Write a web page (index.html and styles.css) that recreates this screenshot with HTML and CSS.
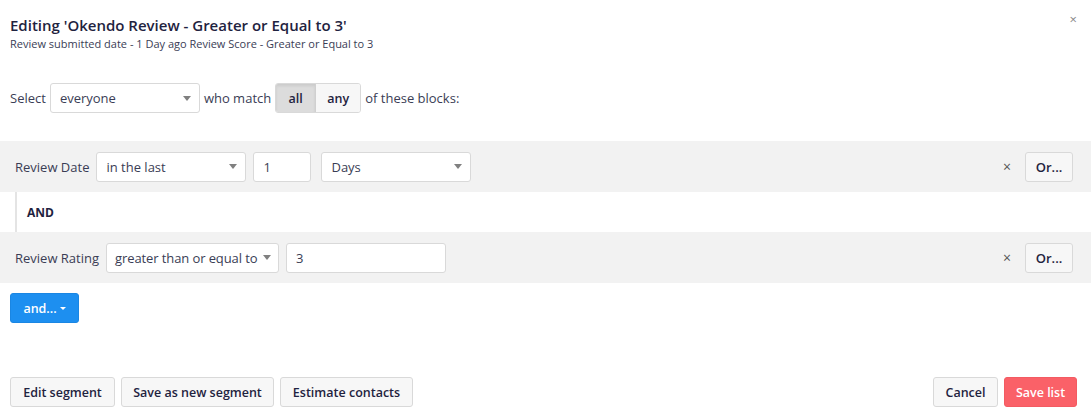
FILE: index.html
```html
<!DOCTYPE html>
<html>
<head>
<meta charset="utf-8">
<link rel="stylesheet" href="styles.css">
</head>
<body>
<div class="modal">
  <header class="head">
    <h1 class="title">Editing 'Okendo Review - Greater or Equal to 3'</h1>
    <p class="subtitle">Review submitted date - 1 Day ago Review Score - Greater or Equal to 3</p>
    <span class="close">&#215;</span>
  </header>

  <div class="match-row">
    <span>Select</span>
    <div class="select w-everyone"><span>everyone</span><i class="caret"></i></div>
    <span>who match</span>
    <div class="btn-group">
      <span class="seg active">all</span>
      <span class="seg">any</span>
    </div>
    <span>of these blocks:</span>
  </div>

  <div class="blocks">
    <div class="block">
      <span class="label">Review Date</span>
      <div class="select w-last"><span>in the last</span><i class="caret"></i></div>
      <div class="input w-num">1</div>
      <div class="select w-days gap-lg"><span>Days</span><i class="caret"></i></div>
      <span class="spacer"></span>
      <span class="remove">&#215;</span>
      <span class="btn or">Or...</span>
    </div>
    <div class="and-sep">AND</div>
    <div class="block">
      <span class="label">Review Rating</span>
      <div class="select w-gte tight"><span>greater than or equal to</span><i class="caret"></i></div>
      <div class="input w-val">3</div>
      <span class="spacer"></span>
      <span class="remove">&#215;</span>
      <span class="btn or">Or...</span>
    </div>
  </div>

  <div class="add-row">
    <span class="btn primary">and... <i class="caret white"></i></span>
  </div>

  <footer class="foot">
    <div class="foot-left">
      <span class="btn">Edit segment</span>
      <span class="btn">Save as new segment</span>
      <span class="btn">Estimate contacts</span>
    </div>
    <div class="foot-right">
      <span class="btn">Cancel</span>
      <span class="btn danger">Save list</span>
    </div>
  </footer>
</div>
</body>
</html>
```
FILE: styles.css
```css
* { box-sizing: border-box; }
html, body { margin: 0; padding: 0; background: #fff; }
body {
  font-family: "Open Sans", "Liberation Sans", sans-serif;
  color: #2a2d45;
  font-size: 13px;
}
.modal { width: 1091px; height: 418px; display: flex; flex-direction: column; }

.head { position: relative; padding: 15px 10px 0 10px; }
.title { margin: 0; font-size: 15px; font-weight: 600; line-height: 20px; color: #1f2340; }
.subtitle { margin: 0; font-size: 11px; line-height: 16px; color: #3a3d55; margin-top: 1px; }
.close { position: absolute; right: 14px; top: 10px; font-size: 13px; color: #888; }

.match-row {
  display: flex; align-items: center; gap: 4px;
  padding: 0 10px; margin-top: 31px; height: 30px;
  color: #3a3d55;
}
.select {
  height: 30px; background: #fff; border: 1px solid #d9d9d9; border-radius: 3px;
  display: flex; align-items: center; justify-content: space-between;
  padding: 0 8px 0 9px; color: #3a3d55; white-space: nowrap;
}
.select.tight { padding: 0 7px 0 8px; letter-spacing: -0.1px; }
.caret {
  display: inline-block; width: 0; height: 0;
  border-left: 4px solid transparent; border-right: 4px solid transparent;
  border-top: 5px solid #808080;
}
.caret.white { border-top-color: #fff; border-left-width: 3px; border-right-width: 3px; border-top-width: 3px; vertical-align: middle; margin-left: 3px; }
.w-everyone { width: 150px; }
.btn-group { display: flex; height: 30px; border: 1px solid #d9d9d9; border-radius: 3px; overflow: hidden; }
.seg { display: flex; align-items: center; justify-content: center; background: #f7f7f7; color: #1f2340; font-weight: 600; font-size: 12.5px; }
.seg:first-child { width: 39px; }
.seg:last-child { width: 45px; border-left: 1px solid #d0d0d0; }
.seg.active { background: #dcdcdc; box-shadow: inset 0 2px 3px rgba(0,0,0,0.08); }

.blocks { margin-top: 28px; }
.block {
  background: #f2f2f2; height: 51px; display: flex; align-items: center;
  padding: 0 18px 0 15px; gap: 7px;
}
.label { color: #3a3d55; margin-right: 0; }
.w-last { width: 150px; }
.w-num { width: 58px; }
.w-days { width: 150px; }
.gap-lg { margin-left: 3px; }
.w-gte { width: 173px; }
.w-val { width: 160px; }
.input {
  height: 30px; background: #fff; border: 1px solid #d9d9d9; border-radius: 3px;
  display: flex; align-items: center; padding: 0 9px; color: #3a3d55;
}
.spacer { flex: 1; }
.remove { color: #555; font-size: 14px; margin-right: 7px; }
.btn {
  display: inline-flex; align-items: center; justify-content: center; white-space: nowrap;
  height: 30px; padding: 0; border: 1px solid #d9d9d9; border-radius: 3px;
  background: #f7f7f7; color: #1f2340; font-weight: 600; font-size: 12.5px;
}
.or { width: 48px; font-size: 13px; }
.and-sep {
  height: 40px; margin-left: 15px; border-left: 2px solid #e4e4e4;
  display: flex; align-items: center; padding-left: 10px;
  font-weight: 700; font-size: 12px; color: #1f2340;
}
.add-row { padding: 10px 10px 0 10px; }
.btn.primary { background: #1d8ff0; border-color: #1a86e3; color: #fff; width: 69px; }

.foot { margin-top: auto; margin-bottom: 11px; display: flex; justify-content: space-between; padding: 0 14px 0 10px; }
.foot-left, .foot-right { display: flex; gap: 6px; }
.foot-left .btn:nth-child(1) { width: 105px; }
.foot-left .btn:nth-child(2) { width: 153px; }
.foot-left .btn:nth-child(3) { width: 133px; }
.foot-right .btn:nth-child(1) { width: 65px; }
.foot-right .btn:nth-child(2) { width: 73px; }
.btn.danger { background: #fa6168; border-color: #f35b62; color: #fff; }
```
